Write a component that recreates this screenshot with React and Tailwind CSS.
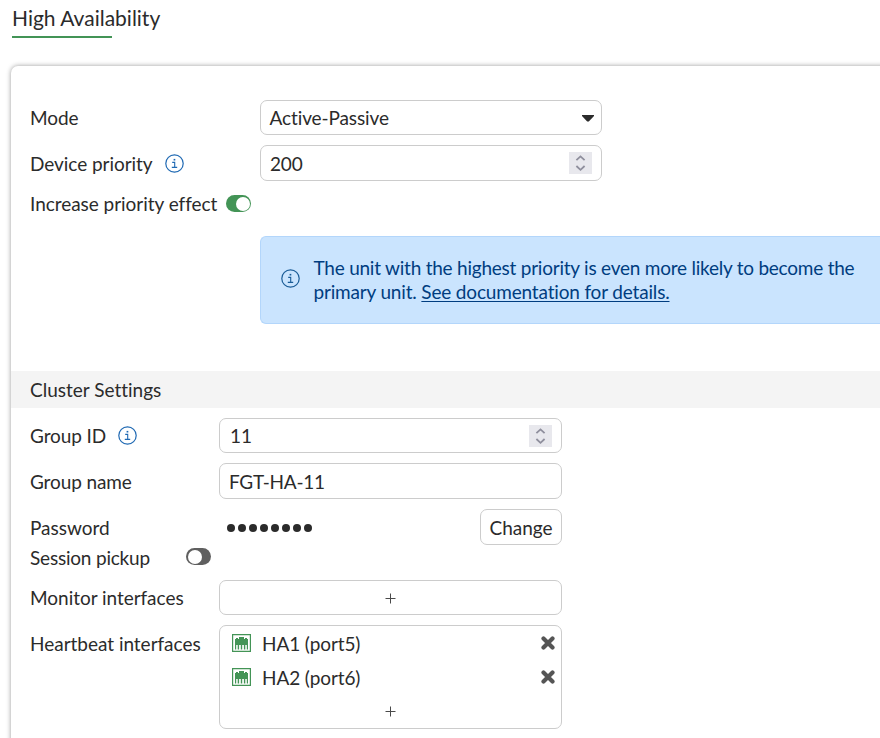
import React from "react";

function InfoIcon({ className }) {
  return (
    <svg viewBox="0 0 19 19" className={`h-[19px] w-[19px] shrink-0 ${className}`} fill="none">
      <circle cx="9.5" cy="9.5" r="8.7" stroke="currentColor" strokeWidth="1.2" />
      <rect x="8.6" y="4.9" width="1.7" height="1.6" fill="currentColor" />
      <path d="M7.2 8.4H9.7V13.2M6.8 13.4H12.2" stroke="currentColor" strokeWidth="1.1" />
    </svg>
  );
}

function Spinner() {
  return (
    <span className="flex h-[22px] w-[23px] items-center justify-center bg-[#e8e8ed]">
      <svg viewBox="0 0 23 22" className="h-[22px] w-[23px]" fill="none" stroke="#8f8f9d" strokeWidth="1.8">
        <path d="M7.4 8.2L11.5 4.4L15.6 8.2M7.4 14L11.5 17.8L15.6 14" />
      </svg>
    </span>
  );
}

function Toggle({ on }) {
  return (
    <span
      className={`-mt-px flex h-[17px] w-[25px] items-center rounded-full p-[1.5px] ${
        on ? "justify-end bg-[#439456]" : "justify-start bg-[#5f5f5f]"
      }`}
    >
      <span className="h-[14px] w-[14px] rounded-full bg-white" />
    </span>
  );
}

function Plus() {
  return (
    <svg viewBox="0 0 11 11" className="h-[11px] w-[11px]" stroke="#4a4a4a" strokeWidth="1">
      <path d="M5.5 0.5V10.5M0.5 5.5H10.5" />
    </svg>
  );
}

function PortIcon() {
  return (
    <svg viewBox="0 0 19 18" className="h-[18px] w-[19px]" fill="#439456">
      <path d="M0.6 0.6H18.4V17.4H0.6Z" fill="none" stroke="#439456" strokeWidth="1.2" />
      <path d="M3 5H4V4H6V5H7V3H12V5H13V4H15V5H16V11H3Z" />
      <path d="M3 10H4.2V15.5H3ZM5.7 10H7.1V15.5H5.7ZM8.8 10H10.2V15.5H8.8ZM11.9 10H13.3V15.5H11.9ZM14.8 10H16V15.5H14.8Z" />
    </svg>
  );
}

function RemoveIcon() {
  return (
    <svg viewBox="0 0 14 14" className="h-[14px] w-[14px]" stroke="#555" strokeWidth="4.2" strokeLinecap="round">
      <path d="M2.5 2.5L11.5 11.5M11.5 2.5L2.5 11.5" />
    </svg>
  );
}

function Interface({ name }) {
  return (
    <div className="flex h-[34px] items-center pr-[6.5px] pl-3">
      <PortIcon />
      <span className="ml-[11px] grow pt-0.5 tracking-[-0.1px]">{name}</span>
      <RemoveIcon />
    </div>
  );
}

const field = "flex items-center rounded-[7px] border border-[#ccc] bg-white";

export default function App() {
  return (
    <div className="h-[738px] w-full overflow-hidden bg-white font-['Lato',sans-serif] text-[19px] leading-6 whitespace-nowrap text-[#2b2b2b] [font-variant-ligatures:none]">
      <header className="ml-3 flex h-[38px] flex-col justify-between pt-1">
        <h1 className="text-[21px] leading-7">High Availability</h1>
        <div className="h-[2px] w-[100px] shrink-0 bg-[#439456]" />
      </header>

      <main className="mt-7 -mr-4 ml-[11px] h-[700px] rounded-tl-[7px] bg-white pt-[34px] shadow-[0_0_5px_rgba(0,0,0,0.4)]">
        <div className="flex h-[35px] items-center pl-[19px]">
          <label className="w-[230px] tracking-[-0.1px]">Mode</label>
          <div className={`${field} h-[35px] w-[342px] justify-between pr-[7px] pl-[8.5px]`}>
            <span className="tracking-[-0.1px]">Active-Passive</span>
            <svg viewBox="0 0 12 7" className="mt-px mr-[0.5px] h-[7px] w-3" fill="#2b2b2b">
              <path d="M0 0H12V1L6.8 6.6H5.2L0 1Z" />
            </svg>
          </div>
        </div>

        <div className="mt-[10px] flex h-9 items-center pl-[19px]">
          <label className="flex w-[230px] items-center gap-3">
            <span className="pt-0.5 tracking-[-0.05px]">Device priority</span>
            <InfoIcon className="text-[#1f69b3]" />
          </label>
          <div className={`${field} h-9 w-[342px] justify-between px-[9px]`}>
            <span className="pt-0.5 tracking-[-0.2px]">200</span>
            <Spinner />
          </div>
        </div>

        <div className="mt-[11px] flex h-6 items-center gap-[9px] pl-[19px]">
          <label className="w-[187px] tracking-[-0.04px]">Increase priority effect</label>
          <Toggle on />
        </div>

        <div className="mt-5 mr-4 ml-[249px] flex h-[88px] items-center rounded-l-[6px] border border-r-0 border-[#b3d6fb] bg-[#cae4fe] pl-5 tracking-[-0.17px] text-[#003d80]">
          <InfoIcon className="mt-[-3px] text-[#1a5c97]" />
          <p className="ml-[13.5px]">
            <span className="tracking-[-0.23px]">
              The unit with the highest priority is even more likely to become the
            </span>
            <br />
            primary unit.{" "}
            <a className="underline decoration-1 underline-offset-2">See documentation for details.</a>
          </p>
        </div>

        <h2 className="mt-[47px] flex h-[37px] items-center bg-[#f4f4f4] pl-[19px]">Cluster Settings</h2>

        <div className="mt-[10px] flex h-[35px] items-center pl-[19px]">
          <label className="flex w-[189px] items-center gap-3 tracking-[-0.1px]">
            Group ID
            <InfoIcon className="text-[#1f69b3]" />
          </label>
          <div className={`${field} h-[35px] w-[343px] justify-between pr-[9px] pl-[10px]`}>
            <span>11</span>
            <Spinner />
          </div>
        </div>

        <div className="mt-[10px] flex h-9 items-center pl-[19px]">
          <label className="w-[189px] pt-0.5 tracking-[-0.12px]">Group name</label>
          <div className={`${field} h-9 w-[343px] pt-0.5 pl-[9px] tracking-[-0.25px]`}>FGT-HA-11</div>
        </div>

        <div className="mt-[10px] flex h-9 items-center pl-[19px]">
          <label className="w-[189px] pt-0.5">Password</label>
          <div className="flex w-[343px] items-center justify-between pl-2">
            <div className="flex gap-[3.5px] pt-0.5">
              {Array.from({ length: 8 }, (_, i) => (
                <span key={i} className="h-[7.5px] w-[7.5px] rounded-full bg-[#2b2b2b]" />
              ))}
            </div>
            <button className="h-9 w-[82px] rounded-[7px] border border-[#ccc] pt-0.5">Change</button>
          </div>
        </div>

        <div className="flex h-6 items-center pl-[19px]">
          <label className="w-[156px] pt-0.5 tracking-[-0.2px]">Session pickup</label>
          <Toggle />
        </div>

        <div className="mt-[11px] flex h-[35px] items-center pl-[19px]">
          <label className="w-[189px] tracking-[-0.03px]">Monitor interfaces</label>
          <div className={`${field} h-[35px] w-[343px] justify-center pt-px`}>
            <Plus />
          </div>
        </div>

        <div className="mt-[10px] flex items-start pl-[19px]">
          <label className="w-[189px] pt-[7px] tracking-[-0.02px]">Heartbeat interfaces</label>
          <div className="h-[104px] w-[343px] rounded-[7px] border border-[#ccc]">
            <Interface name="HA1 (port5)" />
            <Interface name="HA2 (port6)" />
            <div className="flex h-[34px] items-center justify-center">
              <Plus />
            </div>
          </div>
        </div>
      </main>
    </div>
  );
}
